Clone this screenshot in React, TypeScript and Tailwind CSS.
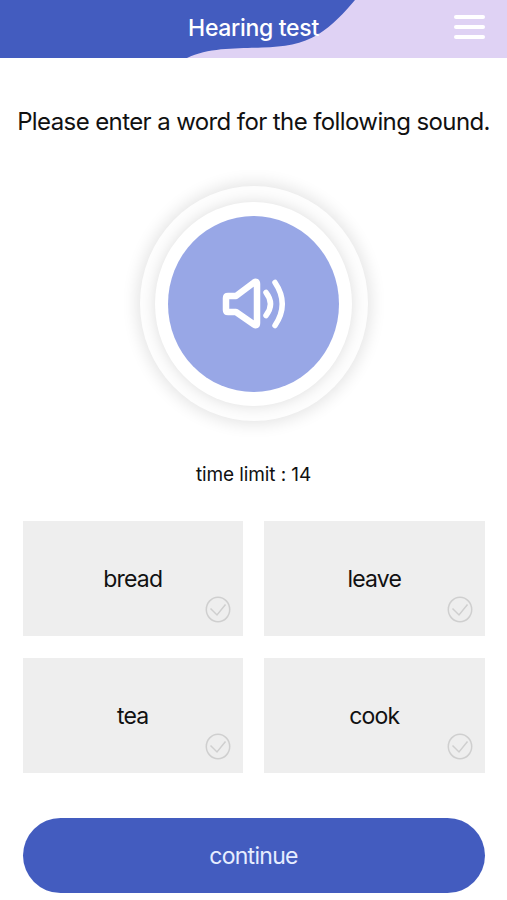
import clsx from "clsx";
import React, { useState } from "react";

const WORDS = ["bread", "leave", "tea", "cook"];

const Header = () => (
  <header className="relative flex h-[58px] items-center justify-center bg-[#dfd2f4]">
    <svg
      className="absolute inset-0"
      width="507"
      height="58"
      viewBox="0 0 507 58"
      fill="none"
    >
      <path
        d="M0 0H355C345 12 332 26 318 34.5C302 44 284 47 262 47.5C240 48.500 209 47 187 58H0Z"
        fill="#435cbf"
      />
    </svg>
    <h1 className="relative mb-0.5 text-[23px] leading-7 font-medium tracking-[-0.3px] text-white">
      Hearing test
    </h1>
    <button
      aria-label="menu"
      className="absolute top-[15px] right-[22px] flex w-[31px] flex-col gap-[6px]"
    >
      <span className="h-1 rounded-full bg-white" />
      <span className="h-1 rounded-full bg-white" />
      <span className="h-1 rounded-full bg-white" />
    </button>
  </header>
);

const SpeakerIcon = () => (
  <svg
    width="66"
    height="54"
    viewBox="0 0 66 54"
    fill="none"
    stroke="white"
    strokeWidth="6.5"
    strokeLinecap="round"
    strokeLinejoin="round"
  >
    <path d="M7 19H15L33 5.500Q36 3.500 36 7V46Q36 49.500 33 47.500L15 35H7Q5 35 5 33V21Q5 19 7 19Z" />
    <path d="M45 15.500Q54 27 45 38.500" strokeWidth="5.5" />
    <path d="M54 5.500Q68.500 27 54 48.500" strokeWidth="5.5" />
  </svg>
);

const SoundButton = () => (
  <div className="flex h-[235px] w-[228px] items-center justify-center rounded-[50%] bg-[#fdfdfd] shadow-[0_0_16px_3px_rgba(0,0,0,0.11)]">
    <div className="flex h-[204px] w-[197px] items-center justify-center rounded-[50%] bg-white shadow-[0_0_13px_1px_rgba(0,0,0,0.11)]">
      <button
        aria-label="play sound"
        className="flex h-[176px] w-[171px] items-center justify-center rounded-[50%] bg-[#98a7e6]"
      >
        <SpeakerIcon />
      </button>
    </div>
  </div>
);

const WordCard = ({ word, selected, onClick }) => (
  <button
    onClick={onClick}
    className="relative flex h-[115px] items-center justify-center bg-[#eeeeee] pt-0.5 text-[23px] tracking-[-0.8px]"
  >
    {word}
    <svg
      className={clsx(
        "absolute right-3 bottom-[13px]",
        selected ? "text-[#435cbf]" : "text-[#cfcfcf]"
      )}
      width="26"
      height="27"
      viewBox="0 0 26 27"
      fill="none"
      stroke="currentColor"
      strokeWidth="1.5"
    >
      <ellipse cx="13" cy="13.500" rx="11.700" ry="12.200" />
      <path d="M5.500 12.500L12 19L20.500 8.500" />
    </svg>
  </button>
);

const App = () => {
  const [selected, setSelected] = useState<string | null>(null);

  return (
    <div className="h-[900px] w-[507px] overflow-hidden bg-white font-['Inter',sans-serif] text-[#111111]">
      <Header />
      <main className="flex flex-col items-center px-[22px] pt-12">
        <p className="text-[24px] leading-8 tracking-[-0.6px] whitespace-nowrap">
          Please enter a word for the following sound.
        </p>
        <div className="mt-12">
          <SoundButton />
        </div>
        <p className="mt-[42px] text-[19px] leading-6 tracking-[-0.1px]">
          time limit : 14
        </p>
        <div className="mt-[34px] grid w-[462px] grid-cols-2 gap-x-[21px] gap-y-[22px]">
          {WORDS.map((word) => (
            <WordCard
              key={word}
              word={word}
              selected={selected === word}
              onClick={() => setSelected(word)}
            />
          ))}
        </div>
        <button className="mt-[45px] h-[75px] w-[462px] rounded-full bg-[#435cbf] pt-0.5 text-[23px] tracking-[-0.7px] text-[#e6edff]">
          continue
        </button>
      </main>
    </div>
  );
};

export default App;
